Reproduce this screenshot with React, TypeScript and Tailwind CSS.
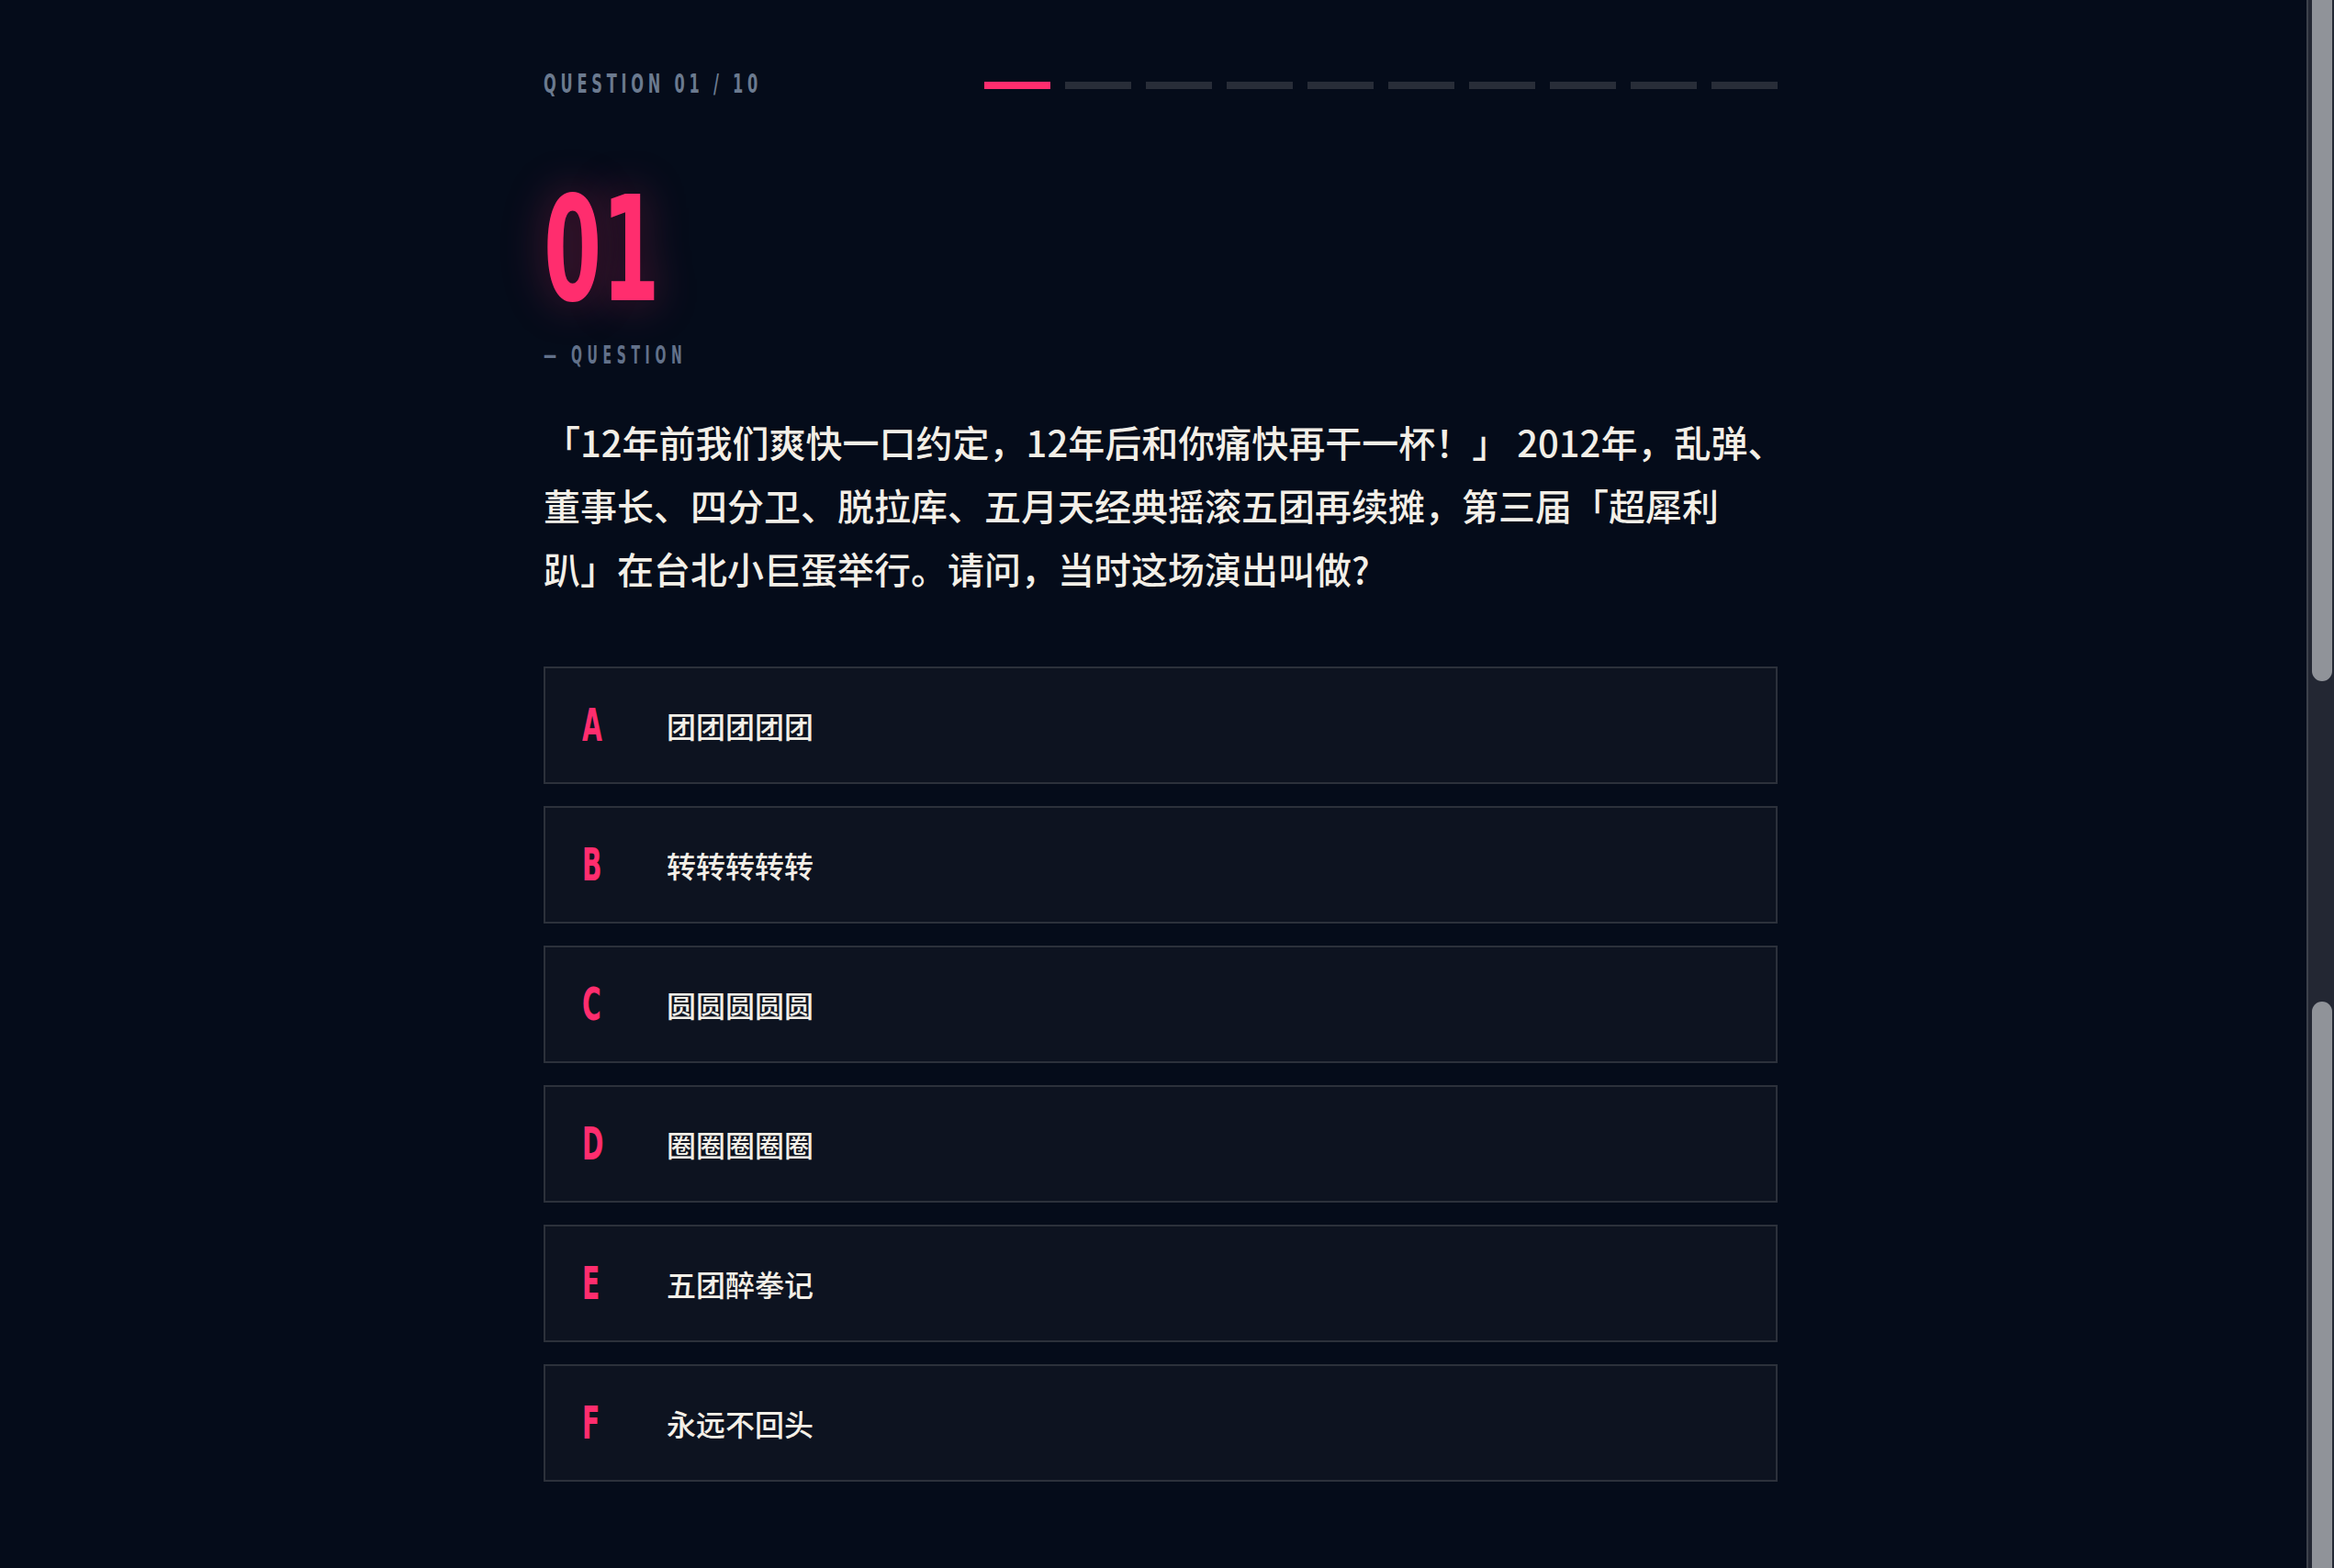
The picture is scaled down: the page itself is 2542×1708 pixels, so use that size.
import React from "react";

const options: [string, string][] = [
  ["A", "团团团团团"],
  ["B", "转转转转转"],
  ["C", "圆圆圆圆圆"],
  ["D", "圈圈圈圈圈"],
  ["E", "五团醉拳记"],
  ["F", "永远不回头"],
];

export default function App() {
  return (
    <div className="flex h-[1708px] w-full overflow-hidden bg-[#050c1a]">
      <main className="flex flex-1 justify-center pl-[16px]">
        <div className="w-[1344px] pt-[71px]">
          <header className="flex h-[40px] items-start justify-between">
            <span className="inline-block origin-left scale-x-[0.62] whitespace-nowrap font-['Liberation_Sans_Narrow','DejaVu_Sans_Condensed','DejaVu_Sans',sans-serif] text-[29px] font-bold leading-[40px] tracking-[7.7px] text-[#6b7a8f]">
              QUESTION 01 / 10
            </span>
            <div className="mt-[18px] flex gap-[16px]">
              {Array.from({ length: 10 }).map((_, i) => (
                <div
                  key={i}
                  className={i === 0 ? "h-[8px] w-[72px] bg-[#ff2d6e]" : "h-[8px] w-[72px] bg-[#282d38]"}
                />
              ))}
            </div>
          </header>

          <div className="mt-[80px] h-[162px]">
            <span className="inline-block origin-left scale-x-[0.64] font-['Liberation_Sans_Narrow','DejaVu_Sans_Condensed','DejaVu_Sans',sans-serif] text-[158px] font-bold leading-[162px] text-[#ff2d6e] [text-shadow:0_0_60px_rgba(255,45,110,0.35)]">
              01
            </span>
          </div>

          <div className="mt-[21px] h-[26px]">
            <span className="inline-block origin-left scale-x-[0.6] whitespace-nowrap font-['Liberation_Sans_Narrow','DejaVu_Sans_Condensed','DejaVu_Sans',sans-serif] text-[26px] font-bold leading-[26px] tracking-[9.3px] text-[#62718a]">
              — QUESTION
            </span>
          </div>

          <div className="mt-[47px] font-['PingFang_SC','Noto_Sans_CJK_SC',sans-serif] text-[40px] font-medium leading-[69px] text-[#f3efe7]">
            <div className="whitespace-nowrap">「12年前我们爽快一口约定，12年后和你痛快再干一杯！」 2012年，乱弹、</div>
            <div className="whitespace-nowrap">董事长、四分卫、脱拉库、五月天经典摇滚五团再续摊，第三届「超犀利</div>
            <div className="whitespace-nowrap">趴」在台北小巨蛋举行。请问，当时这场演出叫做?</div>
          </div>

          <div className="mt-[72px] flex flex-col gap-[24px]">
            {options.map(([letter, text]) => (
              <div
                key={letter}
                className="flex h-[128px] items-center border-2 border-[#2c313b] bg-[#0d1320] pl-[40px]"
              >
                <div className="w-[92px] shrink-0">
                  <span className="inline-block origin-left scale-x-[0.64] font-['Liberation_Sans_Narrow','DejaVu_Sans_Condensed','DejaVu_Sans',sans-serif] text-[49px] font-bold leading-[49px] text-[#ff2d6e]">
                    {letter}
                  </span>
                </div>
                <span className="font-['PingFang_SC','Noto_Sans_CJK_SC',sans-serif] text-[32px] font-medium leading-[40px] text-[#f3efe7]">
                  {text}
                </span>
              </div>
            ))}
          </div>
        </div>
      </main>

      <aside className="flex w-[30px] shrink-0 flex-col border-l-2 border-[#3d424c] bg-[#232733] pl-[4px] pr-[2px]">
        <div className="h-[742px] w-full rounded-b-full bg-[#909399]" />
        <div className="h-[349px] w-full" />
        <div className="w-full flex-1 rounded-t-full bg-[#909399]" />
      </aside>
    </div>
  );
}
